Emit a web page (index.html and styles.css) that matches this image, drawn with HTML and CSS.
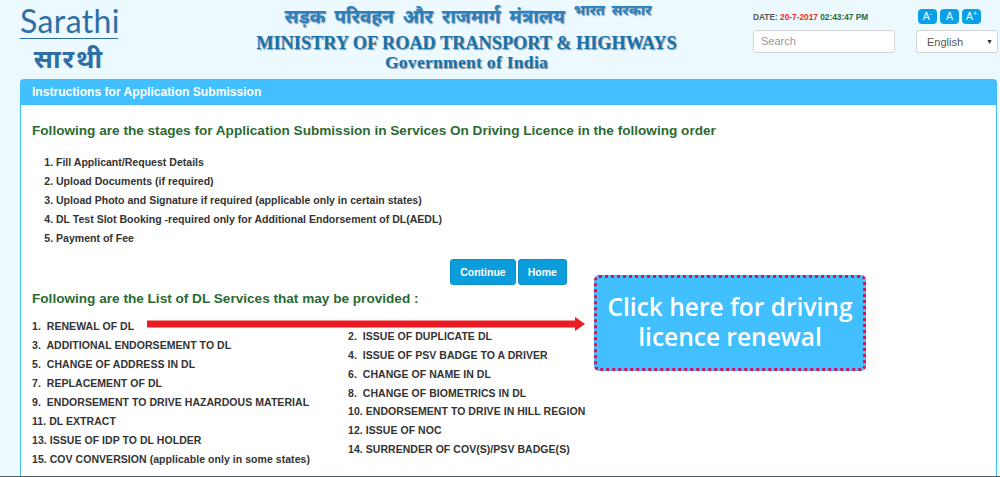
FILE: index.html
```html
<!DOCTYPE html>
<html lang="en">
<head>
<meta charset="utf-8">
<title>Instructions for Application Submission</title>
<link rel="stylesheet" href="styles.css">
</head>
<body>
<header class="top">
  <div class="logo">
    <div class="logo-en">Sarathi</div>
    <div class="logo-hi">सारथी</div>
  </div>
  <div class="title">
    <div class="hindi"><span>सड़क परिवहन और राजमार्ग मंत्रालय</span><sup>भारत सरकार</sup></div>
    <div class="ministry">MINISTRY OF ROAD TRANSPORT &amp; HIGHWAYS</div>
    <div class="govt">Government of India</div>
  </div>
  <div class="tools">
    <div class="left-tools">
      <div class="date">DATE: <b class="red">20-7-2017</b> <b class="green">02:43:47 PM</b></div>
      <div class="search">Search</div>
    </div>
    <div class="right-tools">
      <div class="sizes"><span>A<sup>-</sup></span><span>A</span><span>A<sup>+</sup></span></div>
      <div class="lang"><span>English</span><i>▼</i></div>
    </div>
  </div>
</header>
<main class="panel">
  <h1 class="panel-head">Instructions for Application Submission</h1>
  <div class="panel-body">
    <h2 class="h-stages">Following are the stages for Application Submission in Services On Driving Licence in the following order</h2>
    <ol class="stages">
      <li>Fill Applicant/Request Details</li>
      <li>Upload Documents (if required)</li>
      <li>Upload Photo and Signature if required (applicable only in certain states)</li>
      <li>DL Test Slot Booking -required only for Additional Endorsement of DL(AEDL)</li>
      <li>Payment of Fee</li>
    </ol>
    <div class="buttons"><span class="btn">Continue</span><span class="btn">Home</span></div>
    <h2 class="h-list">Following are the List of DL Services that may be provided :</h2>
    <div class="services">
      <ul class="col">
        <li>1.&nbsp; RENEWAL OF DL</li>
        <li>3.&nbsp; ADDITIONAL ENDORSEMENT TO DL</li>
        <li>5.&nbsp; CHANGE OF ADDRESS IN DL</li>
        <li>7.&nbsp; REPLACEMENT OF DL</li>
        <li>9.&nbsp; ENDORSEMENT TO DRIVE HAZARDOUS MATERIAL</li>
        <li>11. DL EXTRACT</li>
        <li>13. ISSUE OF IDP TO DL HOLDER</li>
        <li>15. COV CONVERSION (applicable only in some states)</li>
      </ul>
      <ul class="col col-right">
        <li>2.&nbsp; ISSUE OF DUPLICATE DL</li>
        <li>4.&nbsp; ISSUE OF PSV BADGE TO A DRIVER</li>
        <li>6.&nbsp; CHANGE OF NAME IN DL</li>
        <li>8.&nbsp; CHANGE OF BIOMETRICS IN DL</li>
        <li>10. ENDORSEMENT TO DRIVE IN HILL REGION</li>
        <li>12. ISSUE OF NOC</li>
        <li>14. SURRENDER OF COV(S)/PSV BADGE(S)</li>
      </ul>
    </div>
    <svg class="arrow" width="438" height="14" viewBox="0 0 438 14"><path d="M0 3.500H428V0L438 7L428 14V10.500H0Z" fill="#ed1c24"/></svg>
    <div class="callout">Click here for driving licence renewal</div>
  </div>
</main>
<div class="page-end"></div>
</body>
</html>
```
FILE: styles.css
```css
html, body { margin: 0; padding: 0; }
body {
  width: 1000px;
  height: 477px;
  overflow: hidden;
  background: #ecf9fe;
  font-family: "Liberation Sans", Arial, sans-serif;
  color: #333;
}
.top { display: flex; height: 79px; }
.logo { width: 236px; padding: 3px 0 0 20px; box-sizing: border-box; color: #2f6fa8; }
.logo-en { width: 98px; height: 35px; font-family: "Lato", sans-serif; font-size: 32px; letter-spacing: 0.4px; line-height: 35px; white-space: nowrap; border-bottom: 1px solid #2f6fa8; }
.logo-hi { width: 98px; height: 31px; font-family: "Noto Sans", "DejaVu Sans", sans-serif; font-size: 26px; font-weight: bold; line-height: 38px; letter-spacing: 2px; white-space: nowrap; text-align: center; }
.title { width: 461px; text-align: center; color: #1a72ab; font-family: "Liberation Serif", serif; font-weight: bold; }
.hindi { font-family: "Noto Sans", "DejaVu Sans", sans-serif; font-size: 19px; line-height: 33px; height: 33px; white-space: nowrap; color: #2b80c0; word-spacing: 4px; text-shadow: 1px 1px 1px #8a9aa5; padding-left: 3px; }
.hindi sup { font-size: 14.500px; margin-left: 9px; vertical-align: 8px; line-height: 0; word-spacing: 3px; }
.ministry { font-size: 18.250px; line-height: 20px; white-space: nowrap; text-shadow: 1px 1px 1px #8a9aa5; }
.govt { font-size: 17.500px; line-height: 18px; letter-spacing: 0.3px; text-shadow: 1px 1px 1px #8a9aa5; }
.tools { display: flex; padding: 9px 0 0 56px; }
.left-tools { width: 163px; }
.date { font-size: 8.300px; font-weight: bold; line-height: 17px; color: #555; white-space: nowrap; }
.red { color: #f02a2a; }
.green { color: #2b6a33; }
.search {
  box-sizing: border-box; width: 142px; height: 23px; margin-top: 4px;
  background: #fff; border: 1px solid #d5d5d5; border-radius: 3px;
  font-size: 11px; line-height: 21px; padding-left: 7px; color: #999;
}
.right-tools { width: 82px; }
.sizes { display: flex; gap: 3px; height: 15px; padding-left: 2px; }
.sizes span {
  width: 19px; height: 15px; background: #0aa0e8; border-radius: 4px; color: #fff;
  font-size: 10.500px; line-height: 15px; text-align: center;
}
.sizes sup { font-size: 7px; line-height: 0; }
.lang {
  box-sizing: border-box; display: flex; justify-content: space-between; align-items: center;
  width: 82px; height: 23px; margin-top: 6px; background: #fff; border: 1px solid #d5d5d5; border-radius: 3px;
  font-size: 11px; color: #555; padding: 0 4px 0 10px;
}
.lang i { font-style: normal; font-size: 7px; color: #333; }
.panel {
  box-sizing: border-box; width: 977px; margin-left: 20px; height: 397px;
  border: 1px solid #41bfff; border-bottom: 0; border-radius: 4px 4px 0 0; background: #fff;
}
.panel-head {
  margin: 0; height: 25px; background: #41bfff; color: #fff;
  font-size: 12.100px; font-weight: bold; line-height: 25px; padding-left: 11px;
}
.panel-body { position: relative; padding: 0 11px; }
.h-stages, .h-list { margin: 0; font-size: 13.600px; font-weight: bold; color: #2b6a33; line-height: 18px; }
.h-stages { padding-top: 17px; }
.stages { margin: 13px 0 0; padding: 0 0 0 24px; font-size: 10.550px; font-weight: bold; color: #333; }
.stages li { height: 19px; line-height: 19px; }
.buttons { display: flex; justify-content: center; gap: 2px; margin-top: 11px; }
.btn {
  box-sizing: border-box; height: 26px; background: #0a9cdb; border: 1px solid #0a8fcc; border-radius: 3px;
  color: #fff; font-size: 10.500px; font-weight: bold; line-height: 24px; padding: 0 9px;
}
.h-list { margin-top: 5px; }
.services { display: flex; margin-top: 9px; }
.col { list-style: none; margin: 0; padding: 0; width: 316px; font-size: 10.500px; font-weight: bold; color: #333; }
.col li { height: 19px; line-height: 19px; white-space: nowrap; letter-spacing: 0.05px; }
.col-right { margin-top: 10px; }
.col-right li { height: 18.850px; }
.arrow { position: absolute; left: 126px; top: 212px; }
.callout {
  position: absolute; left: 573px; top: 170px; box-sizing: border-box; width: 272px; height: 96px;
  background: #41bfff; border: 3px dotted #d6125c; border-radius: 5px;
  color: #fff; font-family: "Open Sans", sans-serif; font-weight: 600; font-size: 24.500px; line-height: 30px; text-align: center;
  padding: 14px 6px 0;
}
.page-end { height: 1px; background: #4f5a5f; }
```
